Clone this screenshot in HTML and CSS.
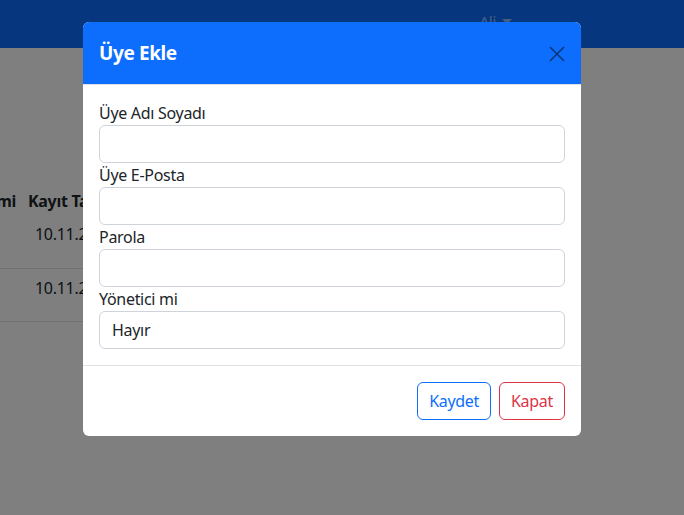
FILE: index.html
```html
<!DOCTYPE html>
<html lang="tr">
<head>
<meta charset="utf-8">
<title>Üyeler</title>
<link rel="stylesheet" href="styles.css">
</head>
<body>
<nav class="navbar">
  <span class="nav-user">Ali <span class="caret"></span></span>
</nav>
<main class="page">
  <table class="list">
    <thead>
      <tr><th class="c1">Yönetici mi</th><th class="c2">Kayıt Tarihi</th></tr>
    </thead>
    <tbody>
      <tr><td class="c1">Hayır</td><td class="c2">10.11.2023</td></tr>
      <tr><td class="c1">Evet</td><td class="c2">10.11.2023</td></tr>
    </tbody>
  </table>
</main>
<div class="backdrop"></div>
<div class="modal">
  <div class="modal-content">
    <div class="modal-header">
      <h5 class="modal-title">Üye Ekle</h5>
      <button class="btn-close" aria-label="Kapat">
        <svg viewBox="0 0 16 16" width="16" height="16"><path d="M1 1L15 15M15 1L1 15" stroke="currentColor" stroke-width="1.6" fill="none"/></svg>
      </button>
    </div>
    <div class="modal-body">
      <label class="form-label">Üye Adı Soyadı</label>
      <input class="form-control" type="text">
      <label class="form-label">Üye E-Posta</label>
      <input class="form-control" type="email">
      <label class="form-label">Parola</label>
      <input class="form-control" type="password">
      <label class="form-label">Yönetici mi</label>
      <div class="form-control select">Hayır</div>
    </div>
    <div class="modal-footer">
      <button class="btn btn-primary">Kaydet</button>
      <button class="btn btn-danger">Kapat</button>
    </div>
  </div>
</div>
</body>
</html>
```
FILE: styles.css
```css
* { box-sizing: border-box; }
html, body { margin: 0; height: 100%; }
body {
  font-family: "Noto Sans", "Open Sans", sans-serif;
  font-size: 16px;
  letter-spacing: -0.3px;
  color: #212529;
  background: #fff;
  overflow: hidden;
}
.navbar {
  height: 48px;
  background: #0d6efd;
  display: flex;
  align-items: flex-start;
  justify-content: flex-end;
  padding: 11px 172px 0 0;
}
.nav-user { color: rgba(255,255,255,.55); font-size: 15px; display: flex; align-items: center; gap: 6px; }
.caret { width: 0; height: 0; border-left: 5px solid transparent; border-right: 5px solid transparent; border-top: 5px solid rgba(255,255,255,.55); }
.page { padding-top: 140px; }
.list { border-collapse: collapse; margin-left: -80px; }
.list th, .list td { text-align: left; white-space: nowrap; }
.list th { font-weight: 700; height: 27px; padding: 1px 8px 0; line-height: 24px; vertical-align: top; }
.list th.c1 { text-align: right; padding-right: 4px; }
.list td { height: 53px; padding: 7px 8px 0; line-height: 24px; vertical-align: top; border-bottom: 1px solid #dee2e6; }
.list .c1 { width: 100px; }
.list td.c2 { padding-left: 15px; }
.backdrop { position: fixed; inset: 0; background: rgba(0,0,0,.5); }
.modal {
  position: absolute;
  top: 22px;
  left: 83px;
  width: 498px;
}
.modal-content {
  background: #fff;
  border-radius: 6px;
  overflow: hidden;
}
.modal-header {
  background: #0d6efd;
  height: 63px;
  display: flex;
  align-items: center;
  justify-content: space-between;
  padding: 1px 15px 0 16px;
  border-bottom: 1px solid #dee2e6;
}
.modal-title { margin: 0; color: #fff; font-size: 19px; letter-spacing: -0.4px; font-weight: 700; line-height: 1.2; }
.btn-close {
  background: none; border: 0; padding: 0; width: 18px; height: 18px;
  color: #0a3577; display: flex; align-items: center; justify-content: center;
}
.modal-body { padding: 16px; display: flex; flex-direction: column; }
.form-label { line-height: 24px; height: 24px; }
.form-control {
  height: 38px;
  border: 1px solid #ced4da;
  border-radius: 6px;
  padding: 6px 12px;
  font: inherit;
  letter-spacing: inherit;
  color: #212529;
  background: #fff;
  display: flex; align-items: center;
}
.form-control:focus { outline: none; }
.modal-footer {
  border-top: 1px solid #dee2e6;
  padding: 16px 16px 16px;
  display: flex;
  justify-content: flex-end;
  gap: 8px;
}
.btn {
  font: inherit;
  letter-spacing: inherit;
  height: 38px;
  padding: 0 11px;
  border-radius: 6px;
  background: #fff;
}
.btn-primary { color: #0d6efd; border: 1px solid #0d6efd; }
.btn-danger { color: #dc3545; border: 1px solid #dc3545; }
```
